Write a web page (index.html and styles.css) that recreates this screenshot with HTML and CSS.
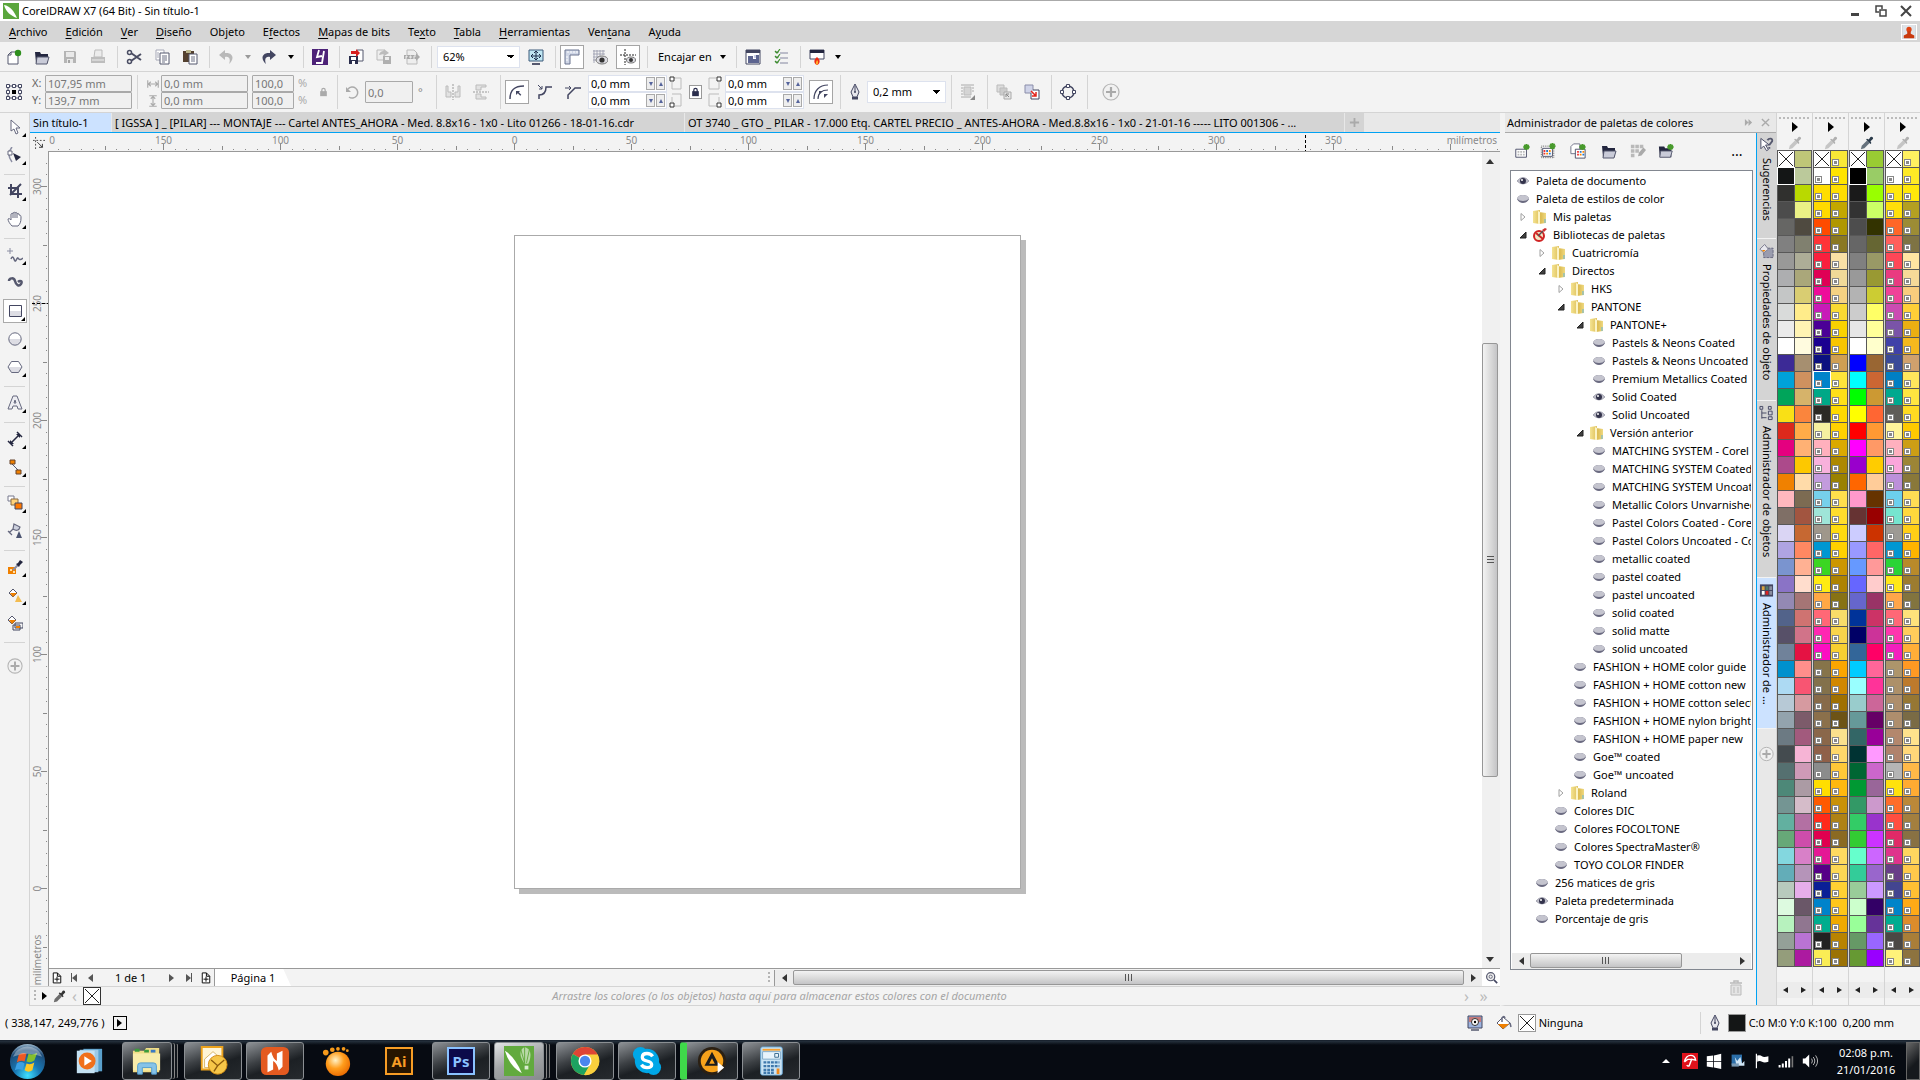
FILE: index.html
```html
<!DOCTYPE html>
<html lang="es">
<head>
<meta charset="utf-8">
<title>CorelDRAW X7 (64 Bit) - Sin título-1</title>
<link rel="stylesheet" href="styles.css">
</head>
<body>
<svg class="sprite" aria-hidden="true">
  <defs>
    <linearGradient id="g-shape" x1="0" y1="0" x2="0" y2="1"><stop offset=".5" stop-color="#fff"/><stop offset=".5" stop-color="#dddde4"/></linearGradient>
    <linearGradient id="g-folder" x1="0" y1="0" x2="1" y2="0"><stop offset="0" stop-color="#f4e392"/><stop offset=".6" stop-color="#dcbc52"/><stop offset="1" stop-color="#efd982"/></linearGradient>
    <radialGradient id="g-orb" cx=".5" cy=".9" r=".9"><stop offset="0" stop-color="#3fe0ff"/><stop offset=".4" stop-color="#1878b4"/><stop offset=".8" stop-color="#1e4c78"/><stop offset="1" stop-color="#9cb8cc"/></radialGradient>
    <radialGradient id="g-gold" cx=".4" cy=".35" r=".7"><stop offset="0" stop-color="#fff3c8"/><stop offset=".5" stop-color="#ff9d1c"/><stop offset="1" stop-color="#e86800"/></radialGradient>
  </defs>
  <symbol id="new" viewBox="0 0 16 16"><path d="M2 6 5 3h7v12H2z" fill="#fff" stroke="#55586e"/><path d="M2 6h3V3" fill="none" stroke="#55586e"/><circle cx="12" cy="4" r="3.2" fill="#2f8f1e"/></symbol>
  <symbol id="open" viewBox="0 0 16 16"><path d="M1 3h5l1 2h7v9H2z" fill="#23263f"/><path d="M3 8h12l-2 7H2z" fill="#c9cbd8" stroke="#55586e"/></symbol>
  <symbol id="save" viewBox="0 0 16 16"><path d="M2 2h11l1 1v11H2z" fill="#b5b5b5"/><path d="M4 3h8v5H4zM5 10h6v4H5z" fill="#e9e9e9"/><path d="M6 11h2v3H6z" fill="#a5a5a5"/></symbol>
  <symbol id="print" viewBox="0 0 16 16"><path d="M5 1h7v7H4z" fill="#ececec" stroke="#bbb"/><path d="M1 8h14v6H1z" fill="#bdbdbd"/><path d="M2 11h12" stroke="#eee"/></symbol>
  <symbol id="cut" viewBox="0 0 16 16"><path d="m5 4 10 7M5 12l10-7" stroke="#4a4d63" stroke-width="2"/><circle cx="3.500" cy="3.500" r="2" fill="none" stroke="#4a4d63" stroke-width="1.500"/><circle cx="3.500" cy="12.500" r="2" fill="none" stroke="#4a4d63" stroke-width="1.500"/></symbol>
  <symbol id="copy" viewBox="0 0 16 16"><path d="M2 1h8v10H2z" fill="#fff" stroke="#a5a7b6"/><path d="M6 4h9v11H6z" fill="#fff" stroke="#55586e"/><path d="M8 7h5M8 9h5M8 11h5M8 13h3" stroke="#6d7084"/><path d="M3 4h2M3 6h2M3 8h2" stroke="#a5a7b6"/></symbol>
  <symbol id="paste" viewBox="0 0 16 16"><path d="M1 2h11v11H1z" fill="#54402f"/><path d="M4 1h5v3H4z" fill="#b9b48b"/><path d="M7 5h8v10H7z" fill="#fff" stroke="#55586e"/><path d="M9 8h4M9 10h4M9 12h4" stroke="#6d7084"/></symbol>
  <symbol id="undo" viewBox="0 0 16 16"><path d="M7 1 1 6l6 5V8c4-1 6 2 4 7 6-5 4-12-4-11z" fill="#b9b9b9"/></symbol>
  <symbol id="redo" viewBox="0 0 16 16"><path d="m9 1 6 5-6 5V8C5 7 3 10 5 15-1 10 1 3 9 4z" fill="#434661"/></symbol>
  <symbol id="connect" viewBox="0 0 16 16"><path d="M0 0h16v16H0z" fill="#4d2278"/><path d="M7 1 5 8l5-1M12 2l-2 12H4M5 8l5-1" stroke="#fff" stroke-width="1.800" fill="none"/></symbol>
  <symbol id="import" viewBox="0 0 16 16"><path d="M9 1h6v11H9z" fill="#fff" stroke="#55586e"/><path d="M1 7h9v8H1z" fill="#2a2d4c"/><path d="M3 8h5v3H3zM4 12h3v3H4z" fill="#fff"/><path d="M3 2h5V0l4 4-4 4V5H3z" fill="#d81e1e"/></symbol>
  <symbol id="export" viewBox="0 0 16 16"><path d="M1 1h7v10H1z" fill="#eee" stroke="#bbb"/><path d="M7 7h8v8H7z" fill="#b0b0b0"/><path d="M9 8h4v3H9z" fill="#eee"/><path d="M3 6c1-4 4-4 5-4V0l5 4-5 3V5C6 5 5 6 3 6z" fill="#bcbcbc"/></symbol>
  <symbol id="pdf" viewBox="0 0 16 16"><path d="M3 1h7l3 3v11H3z" fill="#eee" stroke="#bbb"/><path d="M0 6h12V4l4 4-4 4v-2H0z" fill="#aaa"/><path d="M2 7v3m0-3h1v1H2m4-1v2h1V7H6m4 3V7h2" stroke="#eee" fill="none"/></symbol>
  <symbol id="full" viewBox="0 0 16 16"><path d="M1 1h14v11H1z" fill="#bfe6f2" stroke="#3d5a7a"/><path d="M4 15h8" stroke="#55586e" stroke-width="2"/><path d="M3 7h10M8 2v9M5 5 3 7l2 2M11 5l2 2-2 2M6 4l2-2 2 2M6 9l2 2 2-2" stroke="#1d2f4b" fill="none"/></symbol>
  <symbol id="ruler" viewBox="0 0 16 16"><path d="M1 1h14v5H6v9H1z" fill="#cfd6e6" stroke="#6b7590"/><path d="M4 2v2M7 2v2M10 2v2M13 2v2M2 8h2M2 11h2" stroke="#fff"/></symbol>
  <symbol id="grid" viewBox="0 0 16 16"><path d="M1 2h12M1 5h12M1 8h6M1 11h3M2 1v13M5 1v9M8 1v6M11 1v5" stroke="#9497aa" stroke-width=".8"/><ellipse cx="10" cy="11" rx="6" ry="4" fill="#dcdce2" stroke="#777"/><circle cx="10" cy="11" r="2.600" fill="#333"/></symbol>
  <symbol id="guide" viewBox="0 0 16 16"><path d="M0 6h16M5 0v16" stroke="#222" stroke-dasharray="2 1"/><ellipse cx="11" cy="11" rx="4.500" ry="3" fill="#dcdce2" stroke="#777"/><circle cx="11" cy="11" r="2" fill="#333"/></symbol>
  <symbol id="welcome" viewBox="0 0 16 16"><path d="M1 1h14v14H1z" fill="#fff" stroke="#434661"/><path d="M1 1h14v3H1z" fill="#434661"/><path d="M3 7h5v3h3V6h3v8H3z" fill="#5d6590"/><path d="M9 6h2v3H9z" fill="#cdd2e8"/></symbol>
  <symbol id="options" viewBox="0 0 16 16"><path d="M7 4h8M7 9h8M7 14h8M2 3h4M2 8h4M2 13h4" stroke="#8487a0"/><path d="m2 2 2 2 3-4M2 7l2 2 3-4M2 12l2 2 3-4" stroke="#3b9129" stroke-width="1.200" fill="none"/></symbol>
  <symbol id="launch" viewBox="0 0 16 16"><path d="M1 1h14v9H1z" fill="#fff" stroke="#434661"/><path d="M1 1h14v3H1z" fill="#23263f"/><path d="M8 8c4 3 3 7 0 8-3-1-4-5 0-8" fill="#ee2a12"/><path d="M8 11c2 2 1 4 0 5-2-1-1-3 0-5" fill="#ffb02c"/></symbol>
  <symbol id="origin" viewBox="0 0 18 18"><g fill="#fff" stroke="#434661"><path d="M1.500 1.500h3v3h-3zM7.500 1.500h3v3h-3zM13.500 1.500h3v3h-3zM1.500 7.500h3v3h-3zM13.500 7.500h3v3h-3zM1.500 13.500h3v3h-3zM7.500 13.500h3v3h-3zM13.500 13.500h3v3h-3z"/><path d="M5 3h2m4 0h2M5 15h2m4 0h2M3 5v2m0 4v2M15 5v2m0 4v2"/></g><path d="M7 7h4v4H7z"/></symbol>
  <symbol id="wide" viewBox="0 0 16 16"><path d="M1 3v10M15 3v10M2 8h12M5 5 2 8l3 3M11 5l3 3-3 3" stroke="#aaa" stroke-width="1.500" fill="none"/></symbol>
  <symbol id="tall" viewBox="0 0 16 16"><path d="M3 1h10M3 15h10M8 2v12M5 5l3-3 3 3M5 11l3 3 3-3" stroke="#aaa" stroke-width="1.500" fill="none"/></symbol>
  <symbol id="lock" viewBox="0 0 10 12"><path d="M3 6V3.500a2 2 0 0 1 4 0V6" fill="none" stroke="currentColor" stroke-width="1.500"/><path d="M1 5h8v6H1z" fill="currentColor"/></symbol>
  <symbol id="rotate" viewBox="0 0 16 16"><path d="M4 5a5.500 5.500 0 1 1 1 8" fill="none" stroke="#aaa" stroke-width="1.500"/><path d="M2 3v5h5z" fill="#aaa"/></symbol>
  <symbol id="mirrorh" viewBox="0 0 16 16"><path d="M1 2v11h5V8H3V2zM15 2v11h-5V8h3V2z" fill="#e2e2e2" stroke="#bbb"/><path d="M8 0v16" stroke="#999" stroke-dasharray="2 1"/></symbol>
  <symbol id="mirrorv" viewBox="0 0 16 16"><path d="M3 1h10v2H8v3H3zM3 15h10v-2H8v-3H3z" fill="#e2e2e2" stroke="#bbb"/><path d="M0 8h16" stroke="#999" stroke-dasharray="2 1"/></symbol>
  <symbol id="cround" viewBox="0 0 16 16"><path d="M1 15C1 6 5 2 15 2" fill="none" stroke="#434661" stroke-width="1.500"/><path d="M7 7h4L9.800 8.300l2.500 2.500-1 1-2.500-2.500L7 11z" fill="#434661"/></symbol>
  <symbol id="cscallop" viewBox="0 0 16 16"><path d="M2 15v-4c5 0 7-3 7-8h6" fill="none" stroke="#434661" stroke-width="1.500"/><path d="m1 1 4 4M5 2v3H2" stroke="#434661" fill="none"/></symbol>
  <symbol id="cchamfer" viewBox="0 0 16 16"><path d="M3 15v-4l7-7h6" fill="none" stroke="#434661" stroke-width="1.500"/><path d="M0 4h6M4 2l2 2-2 2" stroke="#434661" fill="none"/></symbol>
  <symbol id="crel" viewBox="0 0 16 16"><path d="M1 15C1 7 6 1 15 1M5 15c0-6 4-9 10-9" fill="none" stroke="#434661" stroke-width="1.200"/><path d="M6 7h4l-4 4zM11 10h4l-4 4z" fill="#434661"/></symbol>
  <symbol id="pen" viewBox="0 0 12 16"><path d="M6 0 2 8l2 5h4l2-5z" fill="#e6e6ec" stroke="#434661"/><path d="M6 2v6" stroke="#434661"/><circle cx="6" cy="8" r="1" fill="#434661"/><path d="M3 13h6v2.500H3z" fill="#434661"/></symbol>
  <symbol id="wrap" viewBox="0 0 16 16"><path d="M1 1h13M1 4h2M1 7h2M1 10h2M1 13h10M12 4h2M12 7h2" stroke="#aaa"/><path d="M4 3h7v8H4z" fill="#d5d5d5" stroke="#bbb"/><path d="M15 11v5h-5z" fill="#888"/></symbol>
  <symbol id="front" viewBox="0 0 16 16"><path d="M1 1h7v7H1z" fill="#ddd" stroke="#bbb"/><path d="M4 4h7v7H4z" fill="#ccc" stroke="#bbb"/><path d="M8 8h7v7H8z" fill="#e5e5e5" stroke="#aaa"/><path d="m13 13-3-3m0 3v-3h3" stroke="#888" fill="none"/></symbol>
  <symbol id="back" viewBox="0 0 16 16"><path d="M1 1h8v8H1z" fill="#cfd3e8" stroke="#8a8da8"/><path d="M9 6h6v9H7V9" fill="#fff" stroke="#434661"/><path d="m7 7 5 5m0-4v4H8" stroke="#e2231a" stroke-width="1.500" fill="none"/></symbol>
  <symbol id="curve" viewBox="0 0 16 16"><circle cx="8" cy="8" r="6" fill="none" stroke="#434661" stroke-width="1.500"/><g fill="#fff" stroke="#434661"><path d="M6.500.5h3v3h-3zM6.500 12.500h3v3h-3zM.5 6.500h3v3h-3zM12.500 6.500h3v3h-3z"/></g></symbol>
  <symbol id="plus" viewBox="0 0 18 18"><circle cx="9" cy="9" r="8" fill="#f1f1f1" stroke="#b5b5b5" stroke-width="1.200"/><path d="M9 4v10M4 9h10" stroke="#aaa" stroke-width="2.200"/></symbol>
  <symbol id="t-pick" viewBox="0 0 16 16"><path d="M4 1v11l3-2 2 5 2-1-2-5h4z" fill="#fff" stroke="#66697f"/></symbol>
  <symbol id="t-shape" viewBox="0 0 16 16"><path d="M5 0C1 5 1 10 5 15" fill="none" stroke="#8b8ea3" stroke-width="1.500"/><path d="M1 4h4v4H1z" fill="#fff" stroke="#66697f"/><path d="m6 6 8 4-5 4z" fill="#23263f"/></symbol>
  <symbol id="t-crop" viewBox="0 0 16 16"><path d="M4 1v10h11M1 5h10v10M3 12 14 1" stroke="#434661" stroke-width="2" fill="none"/></symbol>
  <symbol id="t-hand" viewBox="0 0 16 16"><path d="M5 15C3 13 1 10 1 8c1-1 2 0 3 1V3c1-1 2-1 2 0V2c1-1 2-1 2 0 1-1 2-1 2 1 1-1 2-1 2 1 2 0 2 1 2 3 0 4-1 6-3 8z" fill="#fff" stroke="#66697f"/><path d="M6 3v4M8 2v5M10 3v4" stroke="#66697f"/></symbol>
  <symbol id="t-free" viewBox="0 0 16 16"><path d="M3 1v6M0 4h6" stroke="#8b8ea3"/><path d="M4 12c2-5 3 1 4 2s2-4 3-3 2 3 5 0" stroke="#66697f" stroke-width="1.500" fill="none"/></symbol>
  <symbol id="t-art" viewBox="0 0 16 16"><path d="M2 6c0-3 5-4 6 0s4 6 6 3-1-4-3-2" fill="none" stroke="#55586e" stroke-width="2.500"/></symbol>
  <symbol id="t-rect" viewBox="0 0 16 16"><path d="M2.500 2.500h12v11h-12z" fill="url(#g-shape)" stroke="#434661"/></symbol>
  <symbol id="t-ell" viewBox="0 0 16 16"><circle cx="8" cy="8" r="6.200" fill="url(#g-shape)" stroke="#66697f"/></symbol>
  <symbol id="t-poly" viewBox="0 0 16 16"><path d="M4.500 2.500 1 8l3.500 5.500h7L15 8l-3.500-5.500z" fill="url(#g-shape)" stroke="#66697f"/></symbol>
  <symbol id="t-text" viewBox="0 0 16 16"><path d="M6 1h4l5 13h-4l-1-3H6l-1 3H1zM8 5 7 8h2z" fill="#ededf2" stroke="#66697f"/></symbol>
  <symbol id="t-dim" viewBox="0 0 16 16"><path d="M3 13 13 3M1 10l5 5M10 1l5 5" stroke="#23263f" stroke-width="1.500"/><path d="M3 9v4h4zM9 3h4v4z" fill="#23263f"/></symbol>
  <symbol id="t-conn" viewBox="0 0 16 16"><path d="m5 5 7 7" stroke="#55586e"/><path d="M3 1h5v4H3zM9 11h5v4H9z" fill="#f08000" stroke="#66442e"/></symbol>
  <symbol id="t-blend" viewBox="0 0 16 16"><path d="M1 1h6v5H1z" fill="#fff" stroke="#77798d"/><path d="M4 4h7v6H4z" fill="#ffd27a" stroke="#8a6b45"/><path d="M8 8h7v6H8z" fill="#ff7800" stroke="#434661"/></symbol>
  <symbol id="t-trans" viewBox="0 0 16 16"><path d="m7 1 6 3c-1 4-4 4-7 2zM6 6l-4 4M1 8l4 4" fill="#cdd1de" stroke="#66697f" stroke-width="1.200"/><path d="m12 8 3 7H9z" fill="#4b5470"/></symbol>
  <symbol id="t-drop" viewBox="0 0 16 16"><path d="M1 8h8v7H1z" fill="#f08000"/><path d="M3 10h2v2H3zM6 12h2v2H6z" fill="#ffe0a8"/><path d="m6 11 5-5" stroke="#8b8ea3" stroke-width="2"/><path d="m9 5 2-1 2-3 3 2-3 3-1 2z" fill="#23263f"/></symbol>
  <symbol id="t-fill" viewBox="0 0 16 16"><path d="m6 2 4 4-4 4-4-4z" fill="#fff" stroke="#55586e"/><path d="M3 6h7l-4 4z" fill="#f08000"/><path d="m11 8 4 7H8z" fill="#f3bc50"/></symbol>
  <symbol id="t-smart" viewBox="0 0 16 16"><path d="m5 1 4 4-4 4-4-4z" fill="#fff" stroke="#55586e"/><path d="M2 5h7L5 9z" fill="#f08000"/><path d="M8 8h8v5H8zM6 10h7v5H6z" fill="none" stroke="#434661"/><path d="M9 11h4v2H9z" fill="#f08000"/></symbol>
  <symbol id="drop" viewBox="0 0 16 16"><path d="m1 15 1-4 6-6 3 3-6 6z" fill="currentColor" opacity=".7"/><path d="m7 4 1-1 2 1 2-3q3-1 3 2l-3 3 1 2-1 1z" fill="currentColor"/></symbol>
  <symbol id="none" viewBox="0 0 16 16"><path d="M0 0h16v16H0z" fill="#fff"/><path d="m1 1 14 14M15 1 1 15" stroke="#222"/></symbol>
  <symbol id="eye" viewBox="0 0 14 10"><path d="M1 5q6-7 12 0-6 6-12 0z" fill="#bdbdc8" stroke="#a5a5b2"/><circle cx="7" cy="5" r="3" fill="#34344c"/><circle cx="6" cy="4" r="1" fill="#fff"/></symbol>
  <symbol id="shut" viewBox="0 0 14 10"><path d="M1 5Q2 1 7 1t6 4q-2 4-6 4T1 5z" fill="#6a6a80"/><path d="M1 4.500Q2 1 7 1t6 3.500q-2 2.500-6 2.500T1 4.500z" fill="#c4c4ce"/></symbol>
  <symbol id="folder" viewBox="0 0 14 16"><path d="M0 2l7-1v14l-7-1zM6 3l7 1v10l-7 1z" fill="url(#g-folder)"/><path d="M5 2l2 1v12H5z" fill="#fbf3c6"/><path d="M12 10v4" stroke="#62b4dc"/></symbol>
  <symbol id="library" viewBox="0 0 14 16"><circle cx="6" cy="9" r="5" fill="#f4e7c5" stroke="#d02424" stroke-width="2"/><path d="m3 6 7 6" stroke="#d02424" stroke-width="2"/><path d="m5 9 5-5" stroke="#555" stroke-width="1.500"/><path d="m9 3 3-2 2 1-3 3z" fill="#c33"/></symbol>
  <symbol id="tri-open" viewBox="0 0 8 8"><path d="M7 1v6H1z" fill="#404040" stroke="#222"/></symbol>
  <symbol id="tri-shut" viewBox="0 0 8 8"><path d="M2 .5 6 4 2 7.500z" fill="#fff" stroke="#a0a0a0"/></symbol>
  <symbol id="p-new" viewBox="0 0 18 18"><path d="M2 7h12v9H2z" fill="#fff" stroke="#434661"/><path d="M4 10h2M7 10h2M10 10h2M4 13h2M7 13h2M10 13h2" stroke="#bbb" stroke-width="2"/><path d="M14 1v7M10.500 4.500h7M11.500 2l5 5M16.500 2l-5 5" stroke="#489a2c" stroke-width="2"/></symbol>
  <symbol id="p-sel" viewBox="0 0 18 18"><path d="M1.500 3.500h14v13h-14z" fill="none" stroke="#555" stroke-dasharray="1 1"/><path d="M3 6h11v9H3z" fill="#fff" stroke="#434661"/><path d="M4 9h2M4 12h2" stroke="#e33" stroke-width="2"/><path d="M7 9h2M10 12h2" stroke="#27c" stroke-width="2"/><path d="M10 9h2M7 12h2" stroke="#f80" stroke-width="2"/><path d="M14 0v7M10.500 3.500h7M11.500 1l5 5M16.500 1l-5 5" stroke="#489a2c" stroke-width="2"/></symbol>
  <symbol id="p-doc" viewBox="0 0 18 18"><path d="M1 4l3-3h7v11H1z" fill="#fff" stroke="#66697f"/><path d="M6 7h11v10H6z" fill="#fff" stroke="#434661"/><path d="M8 10h2M8 13h2" stroke="#e33" stroke-width="2"/><path d="M11 10h2M14 13h2" stroke="#27c" stroke-width="2"/><path d="M14 10h2M11 13h2" stroke="#f80" stroke-width="2"/><path d="M14 1v7M10.500 4.500h7M11.500 2l5 5M16.500 2l-5 5" stroke="#489a2c" stroke-width="2"/></symbol>
  <symbol id="p-edit" viewBox="0 0 18 18"><path d="M1 2h4v4H1zM6 2h4v4H6zM11 2h4v4h-4zM1 7h4v4H1zM6 7h4v4H6zM1 12h4v4H1z" fill="#b9b9b9"/><path d="m9 15 1-4 5-6 3 3-5 6z" fill="#aaa"/></symbol>
  <symbol id="p-open" viewBox="0 0 18 18"><path d="M1 4h6l1 2h7v10H2z" fill="#23263f"/><path d="M3 9h13l-2 7H2z" fill="#c9cbd8" stroke="#55586e"/><path d="M14 1v7M10.500 4.500h7M11.500 2l5 5M16.500 2l-5 5" stroke="#489a2c" stroke-width="2"/></symbol>
  <symbol id="trash" viewBox="0 0 12 16"><path d="M0 3h12M4 3V1h4v2" fill="none" stroke="#bbb" stroke-width="1.500"/><path d="M1 5h10v10H1z" fill="#e4e4e4" stroke="#bbb"/><path d="M4 7v6M8 7v6" stroke="#bbb"/></symbol>
  <symbol id="s-hint" viewBox="0 0 16 16"><path d="M2 1v11l3-3 3 5 2-1-3-5h4z" fill="#fff" stroke="#434661"/><path d="M9 3c2-3 6-2 5 1l-3 4m0 2v2" fill="none" stroke="#55586e" stroke-width="2"/></symbol>
  <symbol id="s-prop" viewBox="0 0 16 16"><path d="M5 5h10v10H5z" fill="#9a9cae" stroke="#66697f" stroke-dasharray="3 1"/><path d="m6 1 4 5-5 4-4-4z" fill="#e8e8ee" stroke="#77798d"/><path d="M3 7h4L5 9z" fill="#f08000"/></symbol>
  <symbol id="s-obj" viewBox="0 0 16 16"><path d="M1 1h3v3H1zM10 1h3v3h-3zM3 5v9M3 8h5M3 13h5M10 6h4v4h-4zM10 12h4v3h-4z" fill="#cfcfd8" stroke="#434661"/></symbol>
  <symbol id="s-pal" viewBox="0 0 16 16"><path d="M1 2h14v13H1z" fill="#434661"/><path d="M3 4h3v4H3z" fill="#d9a441"/><path d="M7 4h3v4H7z" fill="#527868"/><path d="M11 4h3v4h-3zM11 9h3v4h-3z" fill="#8a8d9e"/><path d="M3 9h3v4H3z" fill="#fff"/><path d="M7 9h3v4H7z" fill="#d22"/></symbol>
  <symbol id="addpage" viewBox="0 0 12 14"><path d="M1.500 1.500h5l4 4v8h-9zM6.500 1.500v4h4M6 6v6M3 9h6" fill="#fff" stroke="#111" stroke-width="1.200"/></symbol>
  <symbol id="mag" viewBox="0 0 16 16"><circle cx="7" cy="7" r="5" fill="#eee" stroke="#55586e" stroke-width="1.500"/><circle cx="7" cy="7" r="2" fill="none" stroke="#55586e"/><path d="m11 11 4 4" stroke="#434661" stroke-width="2"/></symbol>
  <symbol id="proof" viewBox="0 0 16 16"><path d="M1 1h14v12H1z" fill="#9db3de" stroke="#434661"/><path d="M2 2h12v5H2z" fill="#c67b7b"/><circle cx="8" cy="7" r="3.500" fill="#fff" stroke="#333"/><circle cx="8" cy="7" r="1.200"/><path d="M4 15h8" stroke="#55586e" stroke-width="1.500"/></symbol>
  <symbol id="bucket" viewBox="0 0 16 16"><path d="m7 2 7 6-7 6-6-6z" fill="#fff" stroke="#55586e"/><path d="M2 9h11l-6 5z" fill="#f08000"/><path d="M6 7V3q2-3 3 0M14 8l1 4" fill="none" stroke="#66697f" stroke-width="1.500"/></symbol>
</svg>

<header class="titlebar">
  <svg class="logo" viewBox="0 0 16 16"><path d="M0 0h16v16H0z" fill="#5aa63c"/><path d="M1 2c6 1 10 6 13 13C8 13 3 9 1 2z" fill="#fff"/></svg>
  <span class="title">CorelDRAW X7 (64 Bit) - Sin título-1</span>
  <div class="winbtns">
    <button aria-label="Minimizar"><svg viewBox="0 0 12 12"><path d="M1 9.500h8" stroke="#444" stroke-width="3"/></svg></button>
    <button aria-label="Restaurar"><svg viewBox="0 0 12 12"><path d="M4 7H1V1h6v3M5 5h6v6H5z" fill="none" stroke="#444" stroke-width="1.500"/></svg></button>
    <button aria-label="Cerrar"><svg viewBox="0 0 12 12"><path d="m1 1 10 10M11 1 1 11" stroke="#444" stroke-width="2"/></svg></button>
  </div>
</header>

<nav class="menubar">
  <a href="#"><u>A</u>rchivo</a><a href="#"><u>E</u>dición</a><a href="#"><u>V</u>er</a><a href="#"><u>D</u>iseño</a><a href="#">Ob<u>j</u>eto</a><a href="#">E<u>f</u>ectos</a><a href="#"><u>M</u>apas de bits</a><a href="#">Te<u>x</u>to</a><a href="#"><u>T</u>abla</a><a href="#"><u>H</u>erramientas</a><a href="#">Ven<u>t</u>ana</a><a href="#">A<u>y</u>uda</a>
  <button class="user" aria-label="Usuario"><svg viewBox="0 0 14 16"><path d="M0 0h14v16H0z" fill="#dfe3e8"/><circle cx="7" cy="5" r="3" fill="#e04413"/><path d="M5 7h4v3l4 2v3H1v-3l4-2z" fill="#c93a0e"/></svg></button>
</nav>

<div class="toolbar">
  <button class="tb"><svg><use href="#new"/></svg></button><button class="tb"><svg><use href="#open"/></svg></button><button class="tb"><svg><use href="#save"/></svg></button><button class="tb"><svg><use href="#print"/></svg></button>
  <i class="sep"></i>
  <button class="tb"><svg><use href="#cut"/></svg></button><button class="tb"><svg><use href="#copy"/></svg></button><button class="tb"><svg><use href="#paste"/></svg></button>
  <i class="sep"></i>
  <button class="tb"><svg><use href="#undo"/></svg></button><button class="caret off" aria-label="Lista deshacer"></button><button class="tb"><svg><use href="#redo"/></svg></button><button class="caret" aria-label="Lista rehacer"></button>
  <i class="sep"></i>
  <button class="tb"><svg><use href="#connect"/></svg></button>
  <i class="sep"></i>
  <button class="tb"><svg><use href="#import"/></svg></button><button class="tb"><svg><use href="#export"/></svg></button><button class="tb"><svg><use href="#pdf"/></svg></button>
  <i class="sep"></i>
  <select class="combo zoom" aria-label="Zoom"><option>62%</option></select>
  <button class="tb"><svg><use href="#full"/></svg></button>
  <i class="sep"></i>
  <button class="tb on"><svg><use href="#ruler"/></svg></button><button class="tb"><svg><use href="#grid"/></svg></button><button class="tb on"><svg><use href="#guide"/></svg></button>
  <i class="sep"></i>
  <button class="snap">Encajar en</button><button class="caret" aria-label="Opciones de encaje"></button>
  <i class="sep"></i>
  <button class="tb"><svg><use href="#welcome"/></svg></button><button class="tb"><svg><use href="#options"/></svg></button>
  <i class="sep"></i>
  <button class="tb"><svg><use href="#launch"/></svg></button><button class="caret" aria-label="Iniciar aplicación"></button>
</div>

<div class="toolbar props">
  <button class="tb first"><svg class="big"><use href="#origin"/></svg></button>
  <div class="pair labels"><label for="px">X:</label><label for="py">Y:</label></div>
  <div class="pair w86"><input id="px" disabled value="107,95 mm"><input id="py" disabled value="139,7 mm"></div>
  <i class="sep"></i>
  <div class="pair marks"><svg><use href="#wide"/></svg><svg><use href="#tall"/></svg></div>
  <div class="pair w86"><input aria-label="Ancho" disabled value="0,0 mm"><input aria-label="Alto" disabled value="0,0 mm"></div>
  <div class="pair w42"><input aria-label="Escala X" disabled value="100,0"><input aria-label="Escala Y" disabled value="100,0"></div>
  <div class="pair pct"><span>%</span><span>%</span></div>
  <button class="tb lock off"><svg><use href="#lock"/></svg></button>
  <i class="sep"></i>
  <button class="tb narrow"><svg><use href="#rotate"/></svg></button>
  <input class="angle" aria-label="Ángulo" disabled value="0,0"><span class="deg">°</span>
  <i class="sep"></i>
  <button class="tb"><svg><use href="#mirrorh"/></svg></button><button class="tb"><svg><use href="#mirrorv"/></svg></button>
  <i class="sep"></i>
  <button class="tb on"><svg><use href="#cround"/></svg></button><button class="tb"><svg><use href="#cscallop"/></svg></button><button class="tb"><svg><use href="#cchamfer"/></svg></button>
  <div class="pair spin"><div><input aria-label="Esquina 1" value="0,0 mm"><button class="dn" aria-label="Menos"></button><button class="inc" aria-label="Más"></button></div><div><input aria-label="Esquina 2" value="0,0 mm"><button class="dn" aria-label="Menos"></button><button class="inc" aria-label="Más"></button></div></div>
  <svg class="corners" viewBox="0 0 14 34"><path d="M4 3h8v11H3V7M3 22v5M6 31h6V19H3" fill="none" stroke="#bbb"/><path d="M1 2h4v4H1zM1 28h4v4H1z" fill="#fff" stroke="#333"/></svg>
  <button class="lockbox"><svg><use href="#lock"/></svg></button>
  <svg class="corners" viewBox="0 0 14 34"><path d="M8 3H1v11h10V7M11 22v5M8 31H1V19h10" fill="none" stroke="#bbb"/><path d="M9 2h4v4H9zM9 28h4v4H9z" fill="#fff" stroke="#333"/></svg>
  <div class="pair spin"><div><input aria-label="Esquina 3" value="0,0 mm"><button class="dn" aria-label="Menos"></button><button class="inc" aria-label="Más"></button></div><div><input aria-label="Esquina 4" value="0,0 mm"><button class="dn" aria-label="Menos"></button><button class="inc" aria-label="Más"></button></div></div>
  <button class="tb on near"><svg><use href="#crel"/></svg></button>
  <i class="sep"></i>
  <button class="tb narrow"><svg><use href="#pen"/></svg></button>
  <select class="combo stroke" aria-label="Grosor de contorno"><option>0,2 mm</option></select>
  <i class="sep"></i>
  <button class="tb"><svg><use href="#wrap"/></svg></button>
  <i class="sep"></i>
  <button class="tb"><svg><use href="#front"/></svg></button><button class="tb"><svg><use href="#back"/></svg></button>
  <i class="sep"></i>
  <button class="tb"><svg><use href="#curve"/></svg></button>
  <i class="sep"></i>
  <button class="tb gap"><svg class="big"><use href="#plus"/></svg></button>
</div>

<main class="work">
  <aside class="toolbox">
    <button class="tool"><svg><use href="#t-pick"/></svg></button><button class="tool"><svg><use href="#t-shape"/></svg></button>
    <i class="hsep"></i>
    <button class="tool"><svg><use href="#t-crop"/></svg></button><button class="tool"><svg><use href="#t-hand"/></svg></button>
    <i class="hsep"></i>
    <button class="tool"><svg><use href="#t-free"/></svg></button><button class="tool plain"><svg><use href="#t-art"/></svg></button><button class="tool active"><svg><use href="#t-rect"/></svg></button><button class="tool"><svg><use href="#t-ell"/></svg></button><button class="tool"><svg><use href="#t-poly"/></svg></button>
    <i class="hsep"></i>
    <button class="tool"><svg><use href="#t-text"/></svg></button>
    <i class="hsep"></i>
    <button class="tool"><svg><use href="#t-dim"/></svg></button><button class="tool"><svg><use href="#t-conn"/></svg></button>
    <i class="hsep"></i>
    <button class="tool"><svg><use href="#t-blend"/></svg></button><button class="tool plain"><svg><use href="#t-trans"/></svg></button>
    <i class="hsep"></i>
    <button class="tool"><svg><use href="#t-drop"/></svg></button><button class="tool"><svg><use href="#t-fill"/></svg></button><button class="tool plain"><svg><use href="#t-smart"/></svg></button>
    <i class="hsep"></i>
    <button class="tool plain more"><svg><use href="#plus"/></svg></button>
  </aside>

  <section class="document">
    <div class="tabs">
      <button class="tab sel">Sin título-1</button><button class="tab two">[ IGSSA ] _ [PILAR] --- MONTAJE --- Cartel ANTES_AHORA - Med. 8.8x16 - 1x0 - Lito 01266 - 18-01-16.cdr</button><button class="tab three">OT 3740 _ GTO _ PILAR - 17.000 Etq. CARTEL PRECIO _ ANTES-AHORA - Med.8.8x16 - 1x0 - 21-01-16 ----- LITO 001306 - ...</button><button class="tab add" aria-label="Nuevo documento"><svg viewBox="0 0 12 12"><path d="M6 1v10M1 6h10" stroke="#aaa" stroke-width="2"/></svg></button>
    </div>
    <div class="sheet">
      <div class="corner"><svg viewBox="0 0 14 14"><path d="M3 0v14M0 4h14" stroke="#333" stroke-dasharray="2 2"/><path d="m5 6 6 6m0-4v4H7" fill="none" stroke="#222"/></svg></div>
      <svg class="hruler" id="hruler"></svg>
      <svg class="vruler" id="vruler"></svg>
      <div class="canvas"><div class="page"></div></div>
      <div class="vscroll"><button class="up" aria-label="Arriba"></button><div class="track"><div class="thumb"><i class="ridges"></i></div></div><button class="down" aria-label="Abajo"></button></div>
      <div class="pages">
        <button><svg class="pg"><use href="#addpage"/></svg></button><button class="first"><i class="bar"></i><i class="lt"></i></button><button><i class="lt"></i></button>
        <span class="count">1 de 1</span>
        <button><i class="rt"></i></button><button class="last"><i class="rt"></i><i class="bar"></i></button><button><svg class="pg"><use href="#addpage"/></svg></button>
        <button class="pagetab">Página 1</button>
        <i class="grip"></i>
        <div class="hscroll"><button class="arrow" aria-label="Izquierda"><i class="lt"></i></button><div class="bar-thumb"><i class="ribs"></i></div><button class="arrow" aria-label="Derecha"><i class="rt"></i></button></div>
        <button class="nav"><svg><use href="#mag"/></svg></button>
      </div>
    </div>
    <div class="docpal">
      <i class="grip"></i><button class="flag"><i class="rt"></i></button><button><svg class="dk"><use href="#drop"/></svg></button><button class="dim">‹</button><button class="none"><svg><use href="#none"/></svg></button>
      <em>Arrastre los colores (o los objetos) hasta aquí para almacenar estos colores con el documento</em>
      <button class="dim">›</button><button class="dim">»</button>
    </div>
  </section>

  <section class="docker">
    <header class="dhead"><h2>Administrador de paletas de colores</h2><button aria-label="Contraer"><svg viewBox="0 0 10 10"><path d="M1 1v8l4-4zM5 1v8l4-4z" fill="#aaa"/></svg></button><button aria-label="Cerrar"><svg viewBox="0 0 10 10"><path d="m1 1 8 8M9 1 1 9" stroke="#aaa" stroke-width="1.500"/></svg></button></header>
    <div class="dbody">
      <div class="dmain">
        <div class="dtools"><button class="g0"><svg><use href="#p-new"/></svg></button><button><svg><use href="#p-sel"/></svg></button><button class="g1"><svg><use href="#p-doc"/></svg></button><button class="g2"><svg><use href="#open"/></svg></button><button><svg><use href="#p-edit"/></svg></button><button><svg><use href="#p-open"/></svg></button><button class="dots">...</button></div>
        <div class="treebox">
          <ul class="tree" id="tree" role="tree"></ul>
          <div class="hscroll"><button class="arrow" aria-label="Izquierda"><i class="lt"></i></button><div class="bar-thumb part"><i class="ribs"></i></div><i class="fill"></i><button class="arrow" aria-label="Derecha"><i class="rt"></i></button></div>
        </div>
        <div class="dfoot"><button aria-label="Eliminar"><svg><use href="#trash"/></svg></button></div>
      </div>
      <div class="sidetabs">
        <button class="s1"><svg><use href="#s-hint"/></svg><span>Sugerencias</span></button>
        <button class="s2"><svg><use href="#s-prop"/></svg><span>Propiedades de objeto</span></button>
        <button class="s3"><svg><use href="#s-obj"/></svg><span>Administrador de objetos</span></button>
        <button class="s4"><svg><use href="#s-pal"/></svg><span>Administrador de ...</span></button>
        <button class="s5"><svg><use href="#plus"/></svg></button>
      </div>
    </div>
  </section>

  <div class="palettes" id="palettes"></div>
</main>

<footer class="status">
  <span class="coords">( 338,147, 249,776 )</span><button class="play"><i class="rt"></i></button>
  <div class="info"><svg class="ic"><use href="#proof"/></svg><svg class="ic b"><use href="#bucket"/></svg><svg class="sw"><use href="#none"/></svg><span class="fillname">Ninguna</span><i class="line"></i><svg class="ic p"><use href="#pen"/></svg><i class="sw black"></i><span>C:0 M:0 Y:0 K:100&nbsp; 0,200 mm</span></div>
</footer>

<footer class="taskbar">
  <button class="orb" aria-label="Inicio"><svg viewBox="0 0 38 38"><circle cx="19" cy="19" r="18" fill="url(#g-orb)"/><path d="M10 12q4-3 8-1l-2 8q-4-2-8 1z" fill="#ee5a24"/><path d="M20 11q4 2 9-1l-3 8q-4 3-8 1z" fill="#84bf2c"/><path d="M8 21q4-3 8 0l-2 7q-4-2-8 0z" fill="#3aa0e4"/><path d="M18 21q4 2 8-1l-2 8q-4 3-8 0z" fill="#fbc827"/><path d="M4 14a16 16 0 0 1 30 0q-15-6-30 0" fill="#fff" opacity=".35"/></svg></button>
  <button class="app"><svg viewBox="0 0 32 32"><path d="M10 3h20v24H10z" fill="#5aa0cc"/><path d="M6 4h20v24H6z" fill="#9cc9e6"/><path d="M3 5h19v24H3z" fill="#c4e1f2"/><circle cx="14" cy="16" r="9" fill="#f0701c"/><path d="m11 11 8 5-8 5z" fill="#fff"/></svg></button>
  <button class="app run stack"><svg viewBox="0 0 32 32"><path d="M1 5h12l2-3h14v26H1z" fill="#f1dd87"/><path d="M3 3h5v3H3zM13 4h5v3h-5z" fill="#3c9b3c"/><path d="M20 4h5v3h-5z" fill="#3b7ac4"/><path d="M1 8h29v18H1z" fill="#f8ecaa"/><path d="M6 30V21q0-3 3-3h14q3 0 3 3v9h-5v-7H11v7z" fill="#86c3e8" stroke="#4f9cd0"/></svg></button>
  <button class="app run"><svg viewBox="0 0 32 32"><path d="M4 1h22v24H4z" fill="#fff5d6" stroke="#eca21c" stroke-width="2"/><path d="m7 14 9-8 9 8v9H7z" fill="#fff" stroke="#d8b465"/><circle cx="21" cy="20" r="10" fill="#f6c648" stroke="#d08a12"/><path d="m14 15 7 6 7-6M21 21l-4 6" fill="none" stroke="#8b5a0c" stroke-width="1.500"/></svg></button>
  <button class="app run"><svg viewBox="0 0 32 32"><rect x="1" y="1" width="30" height="30" rx="6" fill="#e45a20"/><path d="m8 10 4-4q2 8 6 10V8l6-3v17l-4 4q-2-8-6-10v9l-6 3z" fill="#fff"/></svg></button>
  <button class="app"><svg viewBox="0 0 32 32"><circle cx="17" cy="19" r="13" fill="url(#g-gold)"/><circle cx="4" cy="7" r="3" fill="#f79a1a"/><circle cx="11" cy="4" r="2.500" fill="#f79a1a"/><circle cx="17" cy="3" r="2" fill="#f79a1a"/><circle cx="23" cy="3" r="2" fill="#f79a1a"/><circle cx="27" cy="5" r="1.500" fill="#f79a1a"/></svg></button>
  <button class="app"><span class="adobe ai">Ai</span></button>
  <button class="app run"><span class="adobe ps">Ps</span></button>
  <button class="app run stack lit"><svg viewBox="0 0 32 32"><path d="M0 0h32v32H0z" fill="#62aa3e"/><path d="M1 5Q12 12 19 29 6 22 1 5z" fill="#fff"/><path d="M22 1q10 3 4 18h-4Q13 6 22 1z" fill="#b9d9a8"/><path d="M22 1v18M18 4l4 14M27 4l-3 14" stroke="#62aa3e"/><path d="M22 21h4v4h-4z" fill="#d8ecd0"/></svg></button>
  <button class="app run"><svg viewBox="0 0 32 32"><circle cx="16" cy="16" r="15" fill="#f7c92b"/><path d="M16 16 3 8.500A15 15 0 0 1 29.500 9.500z" fill="#de4435"/><path d="M16 16 3 8.500A15 15 0 0 0 15 31l7-12z" fill="#1da261"/><path d="M16 9h13.500A15 15 0 0 1 15 31l7-12z" fill="#f9cf3d"/><circle cx="16" cy="16" r="7" fill="#fff"/><circle cx="16" cy="16" r="5.500" fill="#4a86ee"/></svg></button>
  <button class="app run"><svg viewBox="0 0 32 32"><circle cx="16" cy="16" r="13" fill="#00a7e7"/><circle cx="9" cy="9" r="8" fill="#00a7e7"/><circle cx="23" cy="23" r="8" fill="#00a7e7"/><path d="M22 11q-2-3-6-3-5 0-5 4 0 3 5 4t5 4q0 3-5 3-4 0-6-3" fill="none" stroke="#fff" stroke-width="3.500"/></svg></button>
  <button class="app run busy"><svg viewBox="0 0 32 32"><circle cx="16" cy="16" r="15" fill="#2b2013"/><circle cx="16" cy="16" r="12" fill="#f7a21b"/><path d="m16 6 8 15H8zM16 13l-3 6h6z" fill="#1c1c1c" fill-rule="evenodd"/><path d="m22 17 7 6-7 6z" fill="#fff"/></svg></button>
  <button class="app run"><svg viewBox="0 0 32 32"><rect x="5" y="1" width="23" height="30" rx="2" fill="#c9e3f4" stroke="#6aaad8"/><path d="M7 3h19v2H7z" fill="#f7a030"/><path d="M7 6h19v8H7z" fill="#e8f4fc" stroke="#7fa9c6"/><path d="M8 17.500h17M8 21.500h17M8 25.500h12M8 28.500h12" stroke="#3e78ac" stroke-width="2.500" stroke-dasharray="3 1"/><path d="M22 24h3v6h-3z" fill="#f08a1c"/><path d="M20 8h4v4h-4z" fill="none" stroke="#3a6a8c"/></svg></button>
  <div class="tray">
    <i class="tri"></i>
    <svg viewBox="0 0 20 20"><path d="M0 0h20v20H0z" fill="#e0121b"/><path d="M3 11Q5 3 11 3q5 0 6 6l-5-1-3 8q-2 1-3-1M3 11l4-3 5 0" fill="none" stroke="#fff" stroke-width="1.800"/></svg>
    <svg viewBox="0 0 20 20"><path d="m1 4 8-1v7H1zM10 3l9-2v9h-9zM1 11h8v7l-8-1zM10 11h9v9l-9-2z" fill="#fff"/></svg>
    <svg viewBox="0 0 20 20"><path d="M2 2h13v13H2z" fill="#2b6ea8"/><path d="m6 5 3 5 4-5 2 8 3-3v6H8z" fill="#cfe5f5"/><path d="M2 13h9v4H2z" fill="#7899b4"/></svg>
    <svg viewBox="0 0 20 20"><path d="M3 1v18" stroke="#fff" stroke-width="1.500"/><path d="M4 3q4-1 6 1t8 0v7q-5 2-8 0t-6 0z" fill="#fff"/></svg>
    <svg viewBox="0 0 20 20"><path d="M2 15v3M6 13v5M10 10v8M14 7v11" stroke="#fff" stroke-width="2.500"/><path d="M18 4v14" stroke="#777" stroke-width="2"/></svg>
    <svg viewBox="0 0 20 20"><path d="M1 7h3l5-5v16l-5-5H1z" fill="#fff"/><path d="M12 7q2 3 0 6M14 5q4 5 0 10M17 3q5 7 0 14" fill="none" stroke="#ddd"/></svg>
    <time>02:08 p.m.<br>21/01/2016</time>
    <button class="peek" aria-label="Mostrar escritorio"></button>
  </div>
</footer>
<script src="script.js"></script>
</body>
</html>
```
FILE: styles.css
```css
* { box-sizing: border-box; }
html, body { height: 100%; margin: 0; }
body { display: flex; flex-direction: column; overflow: hidden; background: #f3f3f3; color: #000; font: 11px/16px "Noto Sans", "Open Sans", sans-serif; cursor: default; }
button { display: flex; align-items: center; justify-content: center; padding: 0; border: 0; background: none; color: inherit; font: inherit; flex: none; }
input, select { font: inherit; color: inherit; min-width: 0; }
a { color: inherit; text-decoration: none; }
svg { width: 16px; height: 16px; flex: none; display: block; }
.sprite { position: absolute; width: 0; height: 0; }

/* directional glyphs shared by scrollbars and navigators */
.lt, .rt { width: 0; height: 0; border: 4px solid transparent; }
.lt { border-right: 5px solid currentColor; border-left: 0; }
.rt { border-left: 5px solid currentColor; border-right: 0; }
.bar { width: 1px; height: 9px; background: currentColor; }
.grip { width: 2px; height: 12px; background: repeating-linear-gradient(#b5b5b5 0 2px, transparent 2px 4px); flex: none; }

.titlebar { display: flex; align-items: center; height: 21px; padding: 0 8px 0 3px; gap: 3px; background: #fff; border-top: 1px solid #aaa; flex: none; }
.title { flex: 1; }
.winbtns { display: flex; gap: 13px; }
.winbtns svg { width: 12px; height: 12px; }

.menubar { display: flex; align-items: center; gap: 18px; height: 21px; padding: 0 3px 0 9px; background: #d6d6d6; flex: none; }
.menubar u { text-underline-offset: 2px; }
.user { margin-left: auto; border: 1px solid #fff; }
.user svg { width: 14px; height: 14px; }

.toolbar { display: flex; align-items: center; height: 30px; border-bottom: 1px solid #d4d4d4; flex: none; }
.tb { width: 28px; height: 24px; }
.tb.on { width: 24px; margin: 0 2px; background: #fff; border: 1px solid #a5a5a5; }
.tb.narrow { width: 24px; }
.tb.gap { margin-left: 7px; }
.tb.near { margin-left: 5px; }
.tb .big { width: 18px; height: 18px; }
.sep { width: 1px; height: 22px; margin: 0 2px 0 5px; background: #d4d4d4; flex: none; }
.caret { width: 15px; height: 20px; }
.caret::before { content: ""; border: 3px solid transparent; border-top: 4px solid #000; border-bottom: 0; }
.caret.off::before { border-top-color: #999; }
.combo { appearance: none; height: 22px; padding: 0 5px; border: 1px solid #dde2ee; border-radius: 0; background: #fff linear-gradient(to bottom right, #000 50%, transparent 50%) no-repeat right 4px center / 4px 4px, #fff; }
.combo { background: linear-gradient(to bottom left, #000 50%, transparent 50%) no-repeat right 8px center / 4px 4px, linear-gradient(to bottom right, #000 50%, transparent 50%) no-repeat right 4px center / 4px 4px, #fff; }
.combo.zoom { width: 83px; margin: 0 2px 0 3px; }
.combo.stroke { width: 79px; }
.snap { padding: 0 4px 0 8px; }

.props { height: 41px; }
.props .sep { height: 34px; }
.pair { display: grid; grid-template-rows: 17px 17px; flex: none; }
.pair input, .angle { width: 100%; height: 17px; padding: 0 2px; border: 1px solid #a9a9a9; border-radius: 1px; background: #f0f0f0; color: #777; }
.labels { width: 13px; margin-left: 4px; color: #666; }
.w86 { width: 87px; }
.w42 { width: 42px; margin-left: 4px; }
.marks { width: 14px; margin-left: 7px; align-items: center; }
.marks svg { width: 12px; height: 12px; }
.pct { width: 20px; padding-left: 4px; color: #aaa; }
.lock { width: 18px; color: #aaa; }
.lock svg, .lockbox svg { width: 9px; height: 10px; }
.angle { width: 48px; height: 22px; margin-left: 1px; }
.deg { width: 18px; padding-left: 5px; color: #888; }
.spin { width: 79px; margin-left: 1px; }
.spin div { display: flex; gap: 1px; align-items: center; padding-right: 1px; background: #fff; border: 1px solid #dde2ee; }
.spin input { flex: 1; width: 0; height: 15px; border: 0; background: none; color: #000; }
.spin button { width: 9px; height: 13px; border: 1px solid #aaa; background: #eee; }
.dn::before, .inc::before { content: ""; border: 2px solid transparent; }
.dn::before { border-top: 4px solid #55649c; border-bottom: 0; }
.inc::before { border-bottom: 4px solid #55649c; border-top: 0; }
.corners { width: 14px; height: 34px; margin: 0 2px; }
.lockbox { width: 13px; height: 14px; border: 1px solid #999; background: #fff; margin: 0 4px; color: #2a2d4c; }

.work { flex: 1; display: flex; min-height: 0; }
.toolbox { width: 30px; flex: none; border-right: 1px solid #d4d4d4; }
.tool { position: relative; width: 24px; height: 28px; margin: 0 3px; }
.tool::after { content: ""; position: absolute; right: 1px; bottom: 4px; border: 2px solid #000; border-left-color: transparent; border-top-color: transparent; }
.tool.plain::after { display: none; }
.tool.active { height: 24px; margin: 2px 3px; border: 1px solid #aaa; background: #fff; }
.tool.active::after { bottom: 1px; }
.tool.more { height: 42px; }
.hsep { display: block; height: 1px; margin: 5px 4px 2px; background: #d4d4d4; }

.document { flex: 1; min-width: 0; display: flex; flex-direction: column; }
.tabs { display: flex; height: 20px; border-bottom: 1px solid #00a2f3; background: #e8e8e8; flex: none; }
.tab { justify-content: flex-start; padding: 0 3px; background: #d4d4d4; border-right: 1px solid #e8e8e8; white-space: nowrap; overflow: hidden; }
.tab.sel { width: 82px; background: #cce2ff; }
.tab.two { width: 573px; }
.tab.three { width: 660px; }
.tab.add { width: 20px; justify-content: center; }
.tab svg { width: 11px; height: 11px; }
.sheet { flex: 1; min-height: 0; display: grid; grid-template: 19px 1fr 18px / 18px 1fr 18px; }
.corner { display: flex; align-items: center; justify-content: center; }
.corner svg { width: 12px; height: 12px; }
.hruler { grid-area: 1 / 2 / 2 / 4; width: 100%; height: 19px; border-bottom: 1px solid #999; }
.vruler { grid-area: 2 / 1 / 4 / 2; width: 19px; height: 100%; border-right: 1px solid #999; overflow: hidden; }
.hruler, .vruler { font-size: 10px; fill: #8a8a8a; }
.canvas { position: relative; grid-area: 2 / 2; background: #fff; overflow: hidden; margin-left: 1px; }
.page { position: absolute; left: 465px; top: 83px; width: 507px; height: 654px; border: 1px solid #aaa; background: #fff; box-shadow: 5px 5px 0 #bbb; }
.vscroll { grid-area: 2 / 3; display: flex; flex-direction: column; background: #f0f0f0; padding: 0 2px 0 0; }
.vscroll button { height: 18px; }
.up::before, .down::before { content: ""; border: 4px solid transparent; }
.up::before { border-bottom: 5px solid #333; border-top: 0; }
.down::before { border-top: 5px solid #333; border-bottom: 0; }
.track { flex: 1; display: grid; grid-template-rows: 22fr 55fr 22fr; }
.thumb { grid-row: 2; display: flex; align-items: center; justify-content: center; border: 1px solid #979797; border-radius: 2px; background: linear-gradient(90deg, #f3f3f3, #dcdcdc 50%, #c4c4c6); }
.ridges { width: 7px; height: 7px; background: repeating-linear-gradient(#555 0 1px, transparent 1px 3px); }
.ribs { width: 8px; height: 7px; background: repeating-linear-gradient(90deg, #555 0 1px, transparent 1px 3px); }
.pages { grid-area: 3 / 2 / 4 / 4; display: flex; align-items: center; border-top: 1px solid #999; color: #555; }
.pages > button { width: 17px; height: 17px; }
.pages .pg { width: 10px; height: 13px; }
.pages .count { width: 64px; padding-left: 16px; color: #000; }
.pages > .pagetab { width: 77px; background: #fff; border-left: 1px solid #999; color: #000; clip-path: polygon(0 0, 90% 0, 100% 100%, 0 100%); }
.pages > .grip { margin: 0 4px 0 auto; }
.hscroll { display: flex; height: 16px; background: #ececec; color: #333; }
.pages > .hscroll { border-left: 1px solid #999; flex: 0 1 708px; }
.arrow { width: 18px; height: 16px; }
.bar-thumb { flex: 1; display: flex; align-items: center; justify-content: center; height: 15px; border: 1px solid #979797; border-radius: 2px; background: linear-gradient(#f3f3f3, #dcdcdc 50%, #c4c4c6); }
.pages > .nav { width: 18px; background: #fff; }
.nav svg { width: 13px; height: 13px; }
.docpal { display: flex; align-items: center; height: 20px; padding: 0 8px 0 4px; border-top: 1px solid #d4d4d4; border-bottom: 1px solid #d4d4d4; flex: none; }
.docpal em { flex: 1; text-align: center; color: #a5a5a5; }
.docpal .flag { width: 17px; }
.docpal .dk { width: 13px; height: 13px; color: #333; }
.docpal .dim { width: 17px; color: #bbb; font-size: 16px; }
.docpal .none { width: 18px; height: 18px; border: 1px solid #333; }

.docker { width: 276px; flex: none; display: flex; flex-direction: column; border-left: 5px solid #f3f3f3; border-bottom: 1px solid #d4d4d4; }
.dhead { display: flex; align-items: center; height: 20px; padding: 0 6px 0 2px; background: #e8e8e8; border-bottom: 1px solid #aaa; gap: 8px; }
.dhead h2 { flex: 1; margin: 0; font: inherit; }
.dhead svg { width: 9px; height: 9px; }
.dbody { flex: 1; min-height: 0; display: flex; }
.dmain { flex: 1; min-width: 0; display: flex; flex-direction: column; padding: 0 3px 0 5px; }
.dtools { display: flex; align-items: center; height: 37px; padding-right: 6px; }
.dtools button { width: 28px; height: 30px; padding-bottom: 2px; }
.dtools .g0 { width: 24px; }
.dtools .g1, .dtools .g2 { width: 31px; }
.dtools .dots { margin-left: auto; width: 20px; font-size: 14px; }
.treebox { flex: 1; min-height: 0; display: flex; flex-direction: column; padding: 1px 1px 0; border: 1px solid #828790; background: #fff; }
.tree { flex: 1; min-height: 0; margin: 0; padding: 0; list-style: none; overflow: hidden; }
.tree li { display: flex; align-items: center; height: 18px; padding-left: calc(var(--depth) * 19px + 4px); white-space: nowrap; }
.tree .leaf { gap: 6px; }
.tree .leaf svg { width: 14px; height: 10px; }
.tree .node { gap: 6px; padding-left: calc(var(--depth) * 19px + 7px); }
.tree .node svg:first-child { width: 8px; height: 8px; }
.tree .node svg:last-of-type { width: 14px; height: 16px; }
.treebox .hscroll { width: 100%; }
.bar-thumb.part { flex: 0 0 152px; }
.fill { flex: 1; }
.dfoot { display: flex; align-items: center; justify-content: flex-end; height: 35px; padding-right: 11px; }
.dfoot svg { width: 12px; height: 16px; }
.sidetabs { width: 20px; flex: none; display: flex; flex-direction: column; background: #e8e8e8; border-left: 1px solid #00a2f3; }
.sidetabs button { flex-direction: column; justify-content: flex-start; gap: 5px; padding-top: 4px; background: #d4d4d4; border-bottom: 1px solid #f3f3f3; overflow: hidden; white-space: nowrap; }
.sidetabs span { writing-mode: vertical-rl; }
.sidetabs svg { width: 15px; height: 16px; }
.sidetabs .s1 { height: 106px; }
.sidetabs .s2 { height: 162px; }
.sidetabs .s3 { height: 177px; }
.sidetabs .s4 { height: 151px; background: #cce2ff; }
.sidetabs .s5 { padding-top: 17px; background: none; border: 0; }

.palettes { display: flex; flex: none; border-bottom: 1px solid #d4d4d4; }
.palette { width: 36px; padding-top: 4px; border-left: 1px solid #d4d4d4; display: flex; flex-direction: column; }
.phead { display: flex; flex-direction: column; align-items: center; height: 33px; padding-top: 5px; gap: 4px; background: repeating-linear-gradient(90deg, #bbb 0 2px, transparent 2px 4px) no-repeat 2px 0 / 30px 2px; color: #000; }
.phead .rt { border-width: 5px 0 5px 6px; }
.phead svg { width: 14px; height: 14px; color: #b0b0b0; }
.phead svg.live { color: #2a3a4a; }
.swatches { display: grid; grid-template-columns: 16px 16px; grid-auto-rows: 16px; gap: 1px; padding: 1px; background: #585858; }
.cell { width: 16px; height: 16px; padding: 0; background: var(--ink); }
.cell.picked { outline: 1px solid #fff; }
.cell.spot { justify-content: flex-start; align-items: flex-end; padding: 0 0 1px 1px; }
.cell.spot::after { content: ""; width: 5px; height: 5px; border: 1px solid #888; background: #888; box-shadow: inset 0 0 0 1px #fff; }
.pnav { display: flex; justify-content: space-around; margin-top: 15px; height: 16px; background: #ececec; color: #222; }
.pnav .lt, .pnav .rt { border-top-width: 3px; border-bottom-width: 3px; }

.status { display: flex; align-items: center; height: 34px; padding: 0 26px 0 5px; flex: none; }
.play { width: 14px; height: 14px; margin-left: 8px; border: 1px solid #000; }
.info { display: flex; align-items: center; margin-left: auto; }
.info .b { margin-left: 13px; }
.sw { width: 18px; height: 18px; margin: 0 3px 0 6px; border: 1px solid #999; }
.black { background: #141616; }
.fillname { width: 161px; }
.line { width: 1px; height: 22px; background: #d4d4d4; }
.info .p { width: 12px; margin: 0 1px 0 8px; }

.taskbar { display: flex; gap: 4px; height: 40px; padding-top: 1px; background: linear-gradient(#26323e, #070b12 4px, #070b12); border-top: 1px solid #1a2430; color: #fff; flex: none; }
.orb { width: 56px; padding-right: 2px; }
.orb svg { width: 37px; height: 37px; }
.app { width: 58px; height: 38px; }
.app svg { width: 30px; height: 30px; }
.run { border: 1px solid #8b8f93; border-radius: 3px; background: linear-gradient(160deg, #8d9195, #3c4044 40%, #1c2024 60%, #262a2e); }
.stack { width: 50px; margin-right: 8px; box-shadow: 3px 0 0 -1px #11161c, 4px 0 0 -1px #888, 7px 0 0 -2px #11161c, 8px 0 0 -2px #777; }
.lit { background: linear-gradient(160deg, #e2e4e5, #a2a5a7 50%, #888b8d); }
.busy { border-left: 7px solid #3fd84a; }
.adobe { display: grid; place-items: center; width: 28px; height: 28px; border: 2px solid; font-size: 15px; font-weight: bold; }
.ai { color: #f79d25; background: #261500; }
.ps { color: #8ac2ff; background: #0c0a4a; }
.tray { display: flex; align-items: center; gap: 8px; margin-left: auto; }
.tray svg { width: 16px; height: 16px; }
.tri { border: 4px solid transparent; border-bottom: 4px solid #fff; border-top: 0; margin-right: 4px; }
.tray time { width: 80px; margin-right: -8px; text-align: center; line-height: 17px; }
.peek { width: 14px; height: 38px; border: 1px solid #666; background: linear-gradient(135deg, #666, #16191d 60%); }
```
FILE: script.js
```js
const SVG = "http://www.w3.org/2000/svg";
const icon = (id, cls = "") => `<svg class="${cls}"><use href="#${id}"/></svg>`;

/* rulers: 2.34 px per millimetre, a tick each 5 mm */
const MM = 2.34;
function line(svg, x1, y1, x2, y2, color, dash) {
  const l = document.createElementNS(SVG, "path");
  l.setAttribute("d", `M${x1} ${y1}L${x2} ${y2}`);
  l.setAttribute("stroke", color || "#8a8a8a");
  if (dash) l.setAttribute("stroke-dasharray", dash);
  svg.append(l);
}
function label(svg, text, x, y, rotate, anchor) {
  const t = document.createElementNS(SVG, "text");
  t.textContent = text;
  t.setAttribute("x", x);
  t.setAttribute("y", y);
  t.setAttribute("text-anchor", anchor || "middle");
  if (rotate) t.setAttribute("transform", `rotate(-90 ${x} ${y})`);
  svg.append(t);
}
const tick = mm => (mm % 50 === 0 ? 6 : mm % 25 === 0 ? 4 : 1);

const h = document.getElementById("hruler");
for (let mm = -195; mm <= 420; mm += 5) {
  const x = Math.round(466 + mm * MM) + 0.5;
  line(h, x, 17 - tick(mm), x, 17);
  if (mm % 50 === 0 && mm > -200 && mm < 400) label(h, Math.abs(mm), x, 11);
}
label(h, "0", 4, 11);
label(h, "milímetros", "99.8%", 11, false, "end");
line(h, 1257.5, 2, 1257.5, 18, "#000", "3 2");

const v = document.getElementById("vruler");
for (let mm = -30; mm <= 310; mm += 5) {
  const y = Math.round(736 - mm * MM) + 0.5;
  line(v, 17 - tick(mm), y, 17, y);
  if (mm % 50 === 0) label(v, mm, 11, y, true);
}
label(v, "milímetros", 11, 808, true);
line(v, 2, 151.5, 18, 151.5, "#000", "3 2");

/* palette tree: [depth, kind, text] */
const rows = [
  [0, "eye", "Paleta de documento"], [0, "shut", "Paleta de estilos de color"],
  [0, "+", "Mis paletas"], [0, "lib", "Bibliotecas de paletas"],
  [1, "+", "Cuatricromía"], [1, "-", "Directos"], [2, "+", "HKS"], [2, "-", "PANTONE"], [3, "-", "PANTONE+"],
  [4, "shut", "Pastels & Neons Coated"], [4, "shut", "Pastels & Neons Uncoated"], [4, "shut", "Premium Metallics Coated"],
  [4, "eye", "Solid Coated"], [4, "eye", "Solid Uncoated"], [3, "-", "Versión anterior"],
  [4, "shut", "MATCHING SYSTEM - Corel"], [4, "shut", "MATCHING SYSTEM Coated"], [4, "shut", "MATCHING SYSTEM Uncoated"],
  [4, "shut", "Metallic Colors Unvarnished"], [4, "shut", "Pastel Colors Coated - Corel"], [4, "shut", "Pastel Colors Uncoated - Corel"],
  [4, "shut", "metallic coated"], [4, "shut", "pastel coated"], [4, "shut", "pastel uncoated"],
  [4, "shut", "solid coated"], [4, "shut", "solid matte"], [4, "shut", "solid uncoated"],
  [3, "shut", "FASHION + HOME color guide"], [3, "shut", "FASHION + HOME cotton new"], [3, "shut", "FASHION + HOME cotton selector"],
  [3, "shut", "FASHION + HOME nylon brights"], [3, "shut", "FASHION + HOME paper new"],
  [3, "shut", "Goe™ coated"], [3, "shut", "Goe™ uncoated"], [2, "+", "Roland"],
  [2, "shut", "Colores DIC"], [2, "shut", "Colores FOCOLTONE"], [2, "shut", "Colores SpectraMaster®"], [2, "shut", "TOYO COLOR FINDER"],
  [1, "shut", "256 matices de gris"], [1, "eye", "Paleta predeterminada"], [1, "shut", "Porcentaje de gris"]
];
document.getElementById("tree").innerHTML = rows.map(([depth, kind, text]) => {
  const leaf = kind === "eye" || kind === "shut";
  const art = leaf ? icon(kind) : icon(kind === "+" ? "tri-shut" : "tri-open") + icon(kind === "lib" ? "library" : "folder");
  return `<li role="treeitem" class="${leaf ? "leaf" : "node"}" style="--depth:${depth}">${art}<span>${text.replace("&", "&amp;")}</span></li>`;
}).join("");

/* colour palettes: two columns each; the left one starts with the "no colour" cell */
const palettes = [
  { picked: 1, left: "141616 30302e 4c4c4c 666664 808080 999998 adaeb0 c4c6c6 d9dbda ebebeb ffffff 3c2a96 00a2d9 00a45a f9e016 dc291c e4007f ac4a8b f08100 ffb8be 7f6f66 dad5f4 afa4e2 7a94cf 8a73c6 9389b3 52638a 575068 70829a 0091cd addaf3 b7c9d6 93a3ad 6c7a83 444b4f 557070 4d8878 749593 62b0a0 67a878 83d7df 63adb8 b8cabd ddfae0 b7f2be 94a098 949d7b",
    right: "bfc678 bbc99b b9d900 eaf186 4f4a40 80806f adad97 aaa77a d9cd72 ffec8a fff3b3 fffbdf a68f70 cf915f d6b36a fa853d ffac48 ffb174 fdc800 ffdba9 7c6b52 a25540 c66832 ff8862 ffb193 ffddcd a57575 cf7371 d17389 e51243 ff8f8b f85572 d69aa0 7c5b6a a25a7d f6b4d5 cf9ab7 ab9ba4 d5bcc9 b370a3 cd4dab d880c8 b594b9 e6aeea 6a5768 907690 b973d3 ac1aa0" },
  { picked: 13, spot: true, left: "ffffff ffdd00 ffd900 ff4b00 ff3438 f9203e df0055 ee0c9a c81bb8 4b0096 1a0090 0c1180 0083ca 00a887 2c2a25 f5f0a0 ffb0bd f8b1dc c39bdd 76d0eb 9fe5d8 9f978b 0097d2 3bd622 ffeb12 ffa845 ff6876 ff27b2 fc0ec2 86744a 83714b 876a49 8b704b 8a674a 8f6049 8b8c8c ffde00 ff5a00 ff2a1a e0004f e51795 560087 0a1f96 0083cb 00ad8e 222222 faed55",
    right: "f9e837 ffe400 ffdd00 c3a700 b09700 8a7822 f9e0a5 f0d998 f4d182 f9d932 f9d200 f7c500 cf9f52 ffe43a ffdf18 ffd900 ffd100 dba900 ad8800 9a8100 ffdf4c ffdd2c ffda10 ffd000 cc9600 ae8300 877214 f8dc69 f8d44a f8cf31 fba500 d18700 a07000 6d5316 fae08d fed76a ffc838 ffb80f c99108 af8215 8b6a22 ffda60 fdd754 ffd033 ffc61a efa900 b98300 9b7205" },
  { picked: 1, live: true, left: "000000 1a1a1a 333333 4d4d4d 666666 808080 999999 b3b3b3 cccccc e6e6e6 ffffff 0000ff 00ffff 00ff00 ffff00 ff0000 ff00ff 9900cc ff6600 ff99cc 663333 ccccff 9999ff 6699ff 6666ff 6666cc 003399 000066 336699 00ccff 99ffff 99cccc 669999 336666 003333 006633 009933 339966 33cc66 33cc33 66ffcc 33cc99 99cc99 ccffcc 99ff99 669966 669933",
    right: "99cc33 99cc66 99ff00 ccff66 333300 666633 999966 999933 cccc33 ffff66 ffff99 ffffcc 996633 cc6633 cc9933 ff6633 ff9933 ff9966 ffcc00 ffcc99 663300 990000 cc3300 ff6666 ff9999 ffcccc 993366 cc3366 cc3399 ff0066 ff6699 ff3399 cc6699 660066 990099 ff99ff cc66cc 996699 cc99cc 9933cc cc33ff cc66ff 9966cc cc99ff 330066 663399 9966ff 9900ff" },
  { spot: true, left: "ffffff ffe70e ffdf0a ff6628 ff605c ff4757 e93b80 f04298 cb4cb2 7a54a8 4041a8 3a4a98 007fc4 00a98f 5f5d58 fff59a ffb0be fba6db bc90da 6ccfed 76e5cf 9d9a94 0097d2 2ad437 ffe818 ffa64a ff6876 ff36ae f31fbe ad956b ad9069 ae8e6c ae8e6d b3876d b0826c b5b5b5 ffe20d ff6d2a ff4e40 e02a67 df348c 683f87 434590 0084c9 00ac90 4b4844 fff27a",
    right: "fff160 ffea25 ffe70a b4a021 9c8c35 7e7344 ffe5a2 f6d998 f9cc7d ffcf37 ebaf12 f5b81e d0a16d ffe75c ffe540 ffda22 ffc900 cc9e15 9c8536 89783a ffdd54 ffd83c ffce16 ffb400 b98a2a 9c7c30 82743f fee27b ffcc5b ffae38 ff9923 bd7a2c 967734 7a6b45 ffe28c ffd779 ffb948 ffab32 bb8839 a37f3f 887143 ffd65f ffc94b ffc033 ffaa17 dc8c2b a97e39 8d733f" }
];
document.getElementById("palettes").innerHTML = palettes.map(p => {
  const left = p.left.split(" "), right = p.right.split(" ");
  const cell = (hex, picked) => `<button class="cell${p.spot ? " spot" : ""}${picked ? " picked" : ""}" style="--ink:#${hex}" aria-label="#${hex}"></button>`;
  const cells = right.map((hex, i) =>
    (i ? cell(left[i - 1], i === p.picked) : `<button class="cell" aria-label="Ninguno">${icon("none")}</button>`) + cell(hex)).join("");
  return `<div class="palette"><div class="phead"><i class="rt"></i>${icon("drop", p.live ? "live" : "")}</div><div class="swatches">${cells}</div><div class="pnav"><button><i class="lt"></i></button><button><i class="rt"></i></button></div></div>`;
}).join("");
```
